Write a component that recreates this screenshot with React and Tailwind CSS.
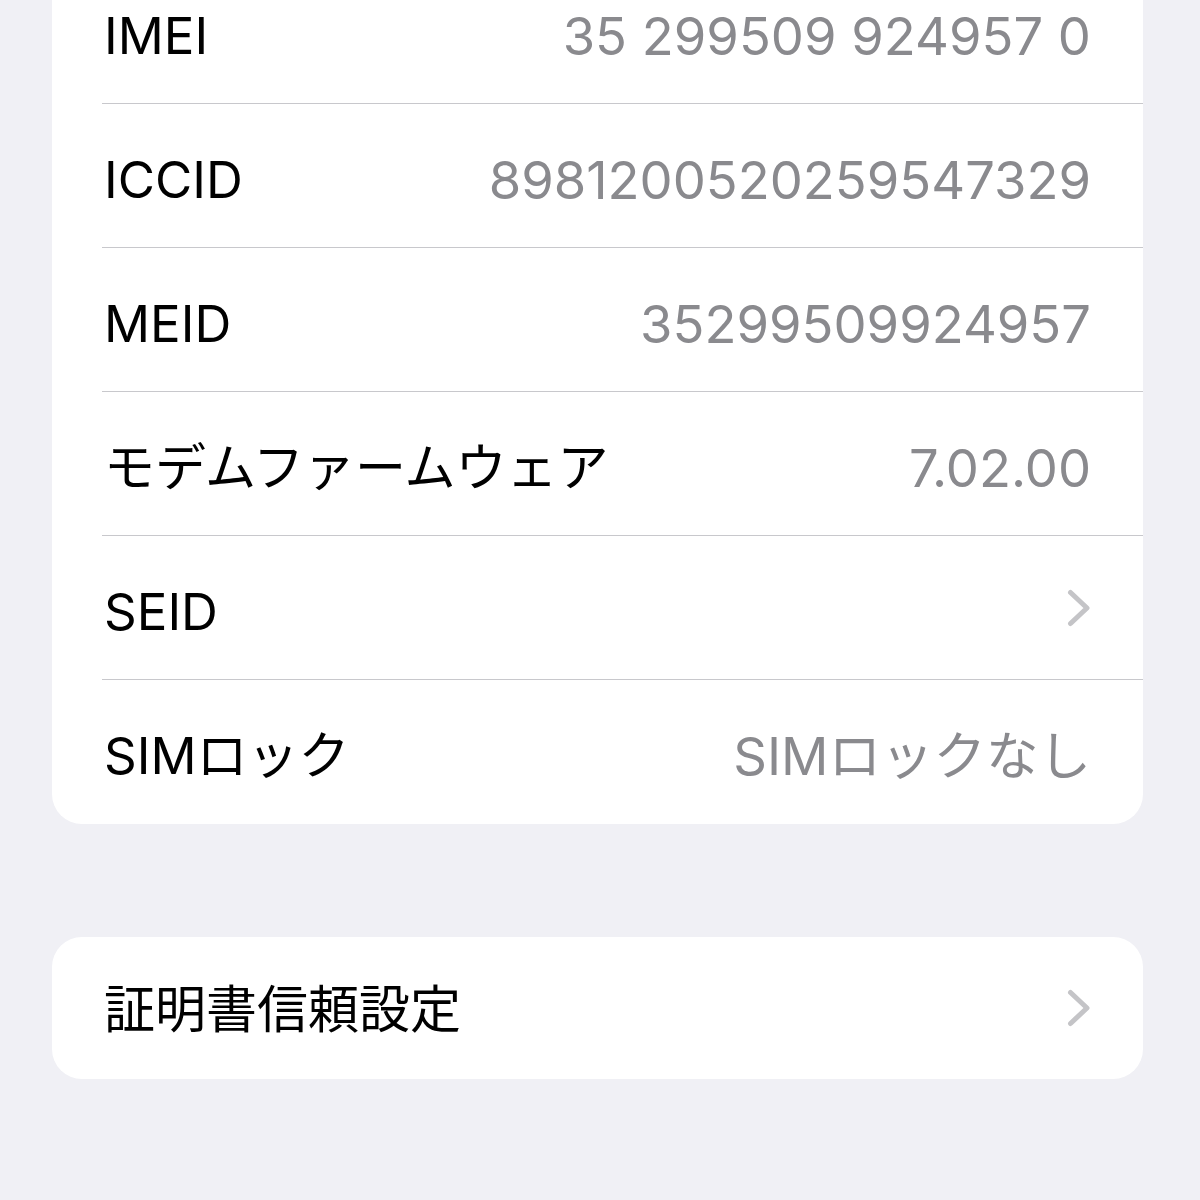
import React from 'react';

const rows = [
  { label: 'IMEI', value: '35 299509 924957 0' },
  { label: 'ICCID', value: '8981200520259547329' },
  { label: 'MEID', value: '35299509924957' },
  { label: 'モデムファームウェア', value: '7.02.00' },
  { label: 'SEID', chevron: true },
  { label: 'SIMロック', value: 'SIMロックなし' },
];

const Chevron = () => (
  <svg width="24" height="38" viewBox="0 0 24 38" fill="none" className="shrink-0">
    <path d="M3.5 3.5 L20 19 L3.5 34.5" stroke="#c4c4c7" strokeWidth="5" strokeLinecap="round" strokeLinejoin="round" />
  </svg>
);

const Row = ({ label, value, chevron, last }) => (
  <div className="pl-[50px]">
    <div className={`flex items-center justify-between h-[144px] pr-[52px] ${last ? '' : 'border-b-[1.5px] border-[#c8c8cc]'}`}>
      <span className="text-[51px] text-black pl-[2px] mt-[9px]">{label}</span>
      {chevron ? <Chevron /> : <span className="text-[52.5px] text-[#8a8a8e] mt-[9px]">{value}</span>}
    </div>
  </div>
);

export default function App() {
  return (
    <div
      className="w-[1200px] h-[1200px] overflow-hidden bg-[#f0f0f5]"
      style={{ fontFamily: '"Inter", "Noto Sans CJK JP", sans-serif' }}
    >
      <div className="ml-[52px] w-[1091px] -mt-[40px] flex flex-col gap-[113px]">
        <div className="bg-white rounded-b-[30px]">
          {rows.map((r, i) => (
            <Row key={r.label} {...r} last={i === rows.length - 1} />
          ))}
        </div>
        <div className="bg-white rounded-[30px]">
          <div className="flex items-center justify-between h-[142px] pl-[52px] pr-[52px]">
            <span className="text-[51px] text-black mt-[4px]">証明書信頼設定</span>
            <Chevron />
          </div>
        </div>
      </div>
    </div>
  );
}
